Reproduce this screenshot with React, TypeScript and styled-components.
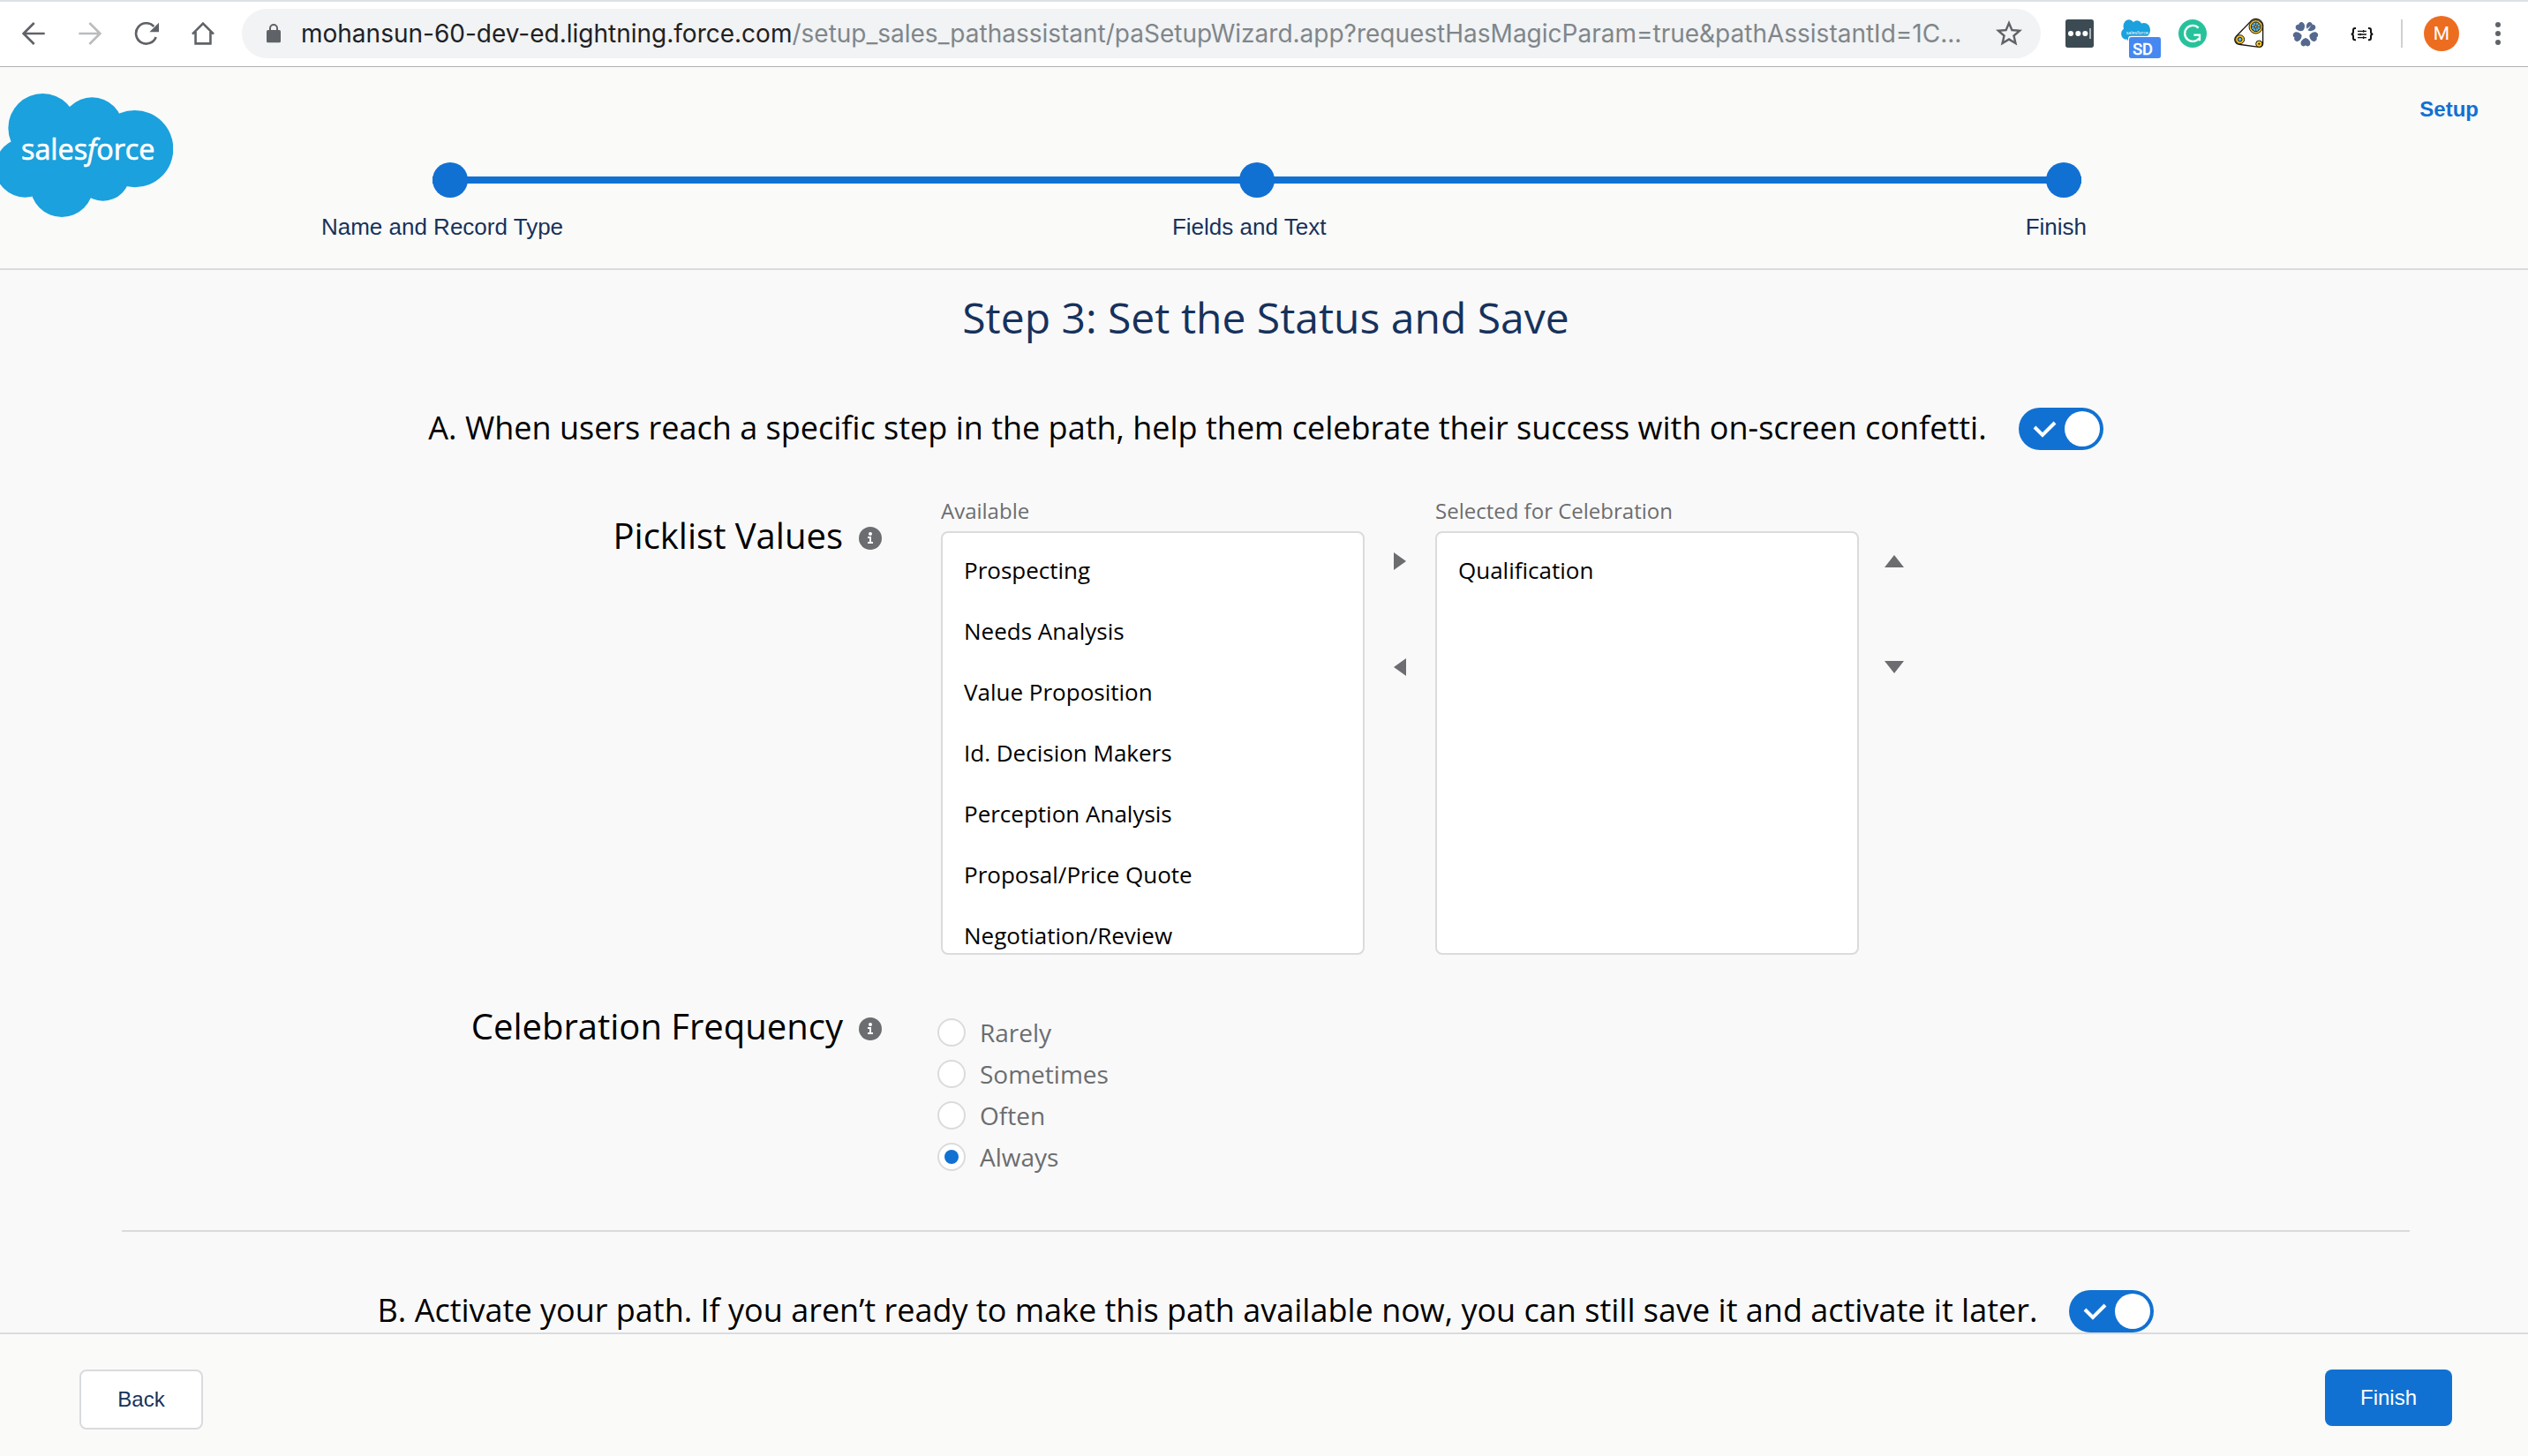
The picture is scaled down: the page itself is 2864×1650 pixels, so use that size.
import React, { useState } from 'react';
import styled, { createGlobalStyle } from 'styled-components';

const color = {
  blue: '#1171d2',
  navy: '#16325c',
  grey: '#6b6d70',
  line: '#d9dbdd',
  chrome: '#5f6368',
  bar: '#fafaf9',
  page: '#f9f9f9',
};

const salesforceSans = '"Open Sans", "Noto Sans", sans-serif';
const arial = '"Liberation Sans", Arial, sans-serif';

const GlobalStyle = createGlobalStyle`
  * { box-sizing: border-box; }
  body { margin: 0; background: ${color.page}; font-family: ${salesforceSans}; }
  button { font: inherit; padding: 0; border: 0; background: none; cursor: pointer; }
  ul, ol { margin: 0; padding: 0; list-style: none; }
`;

const Page = styled.div`
  display: flex;
  flex-direction: column;
  height: 100vh;
`;

/* ---------- browser bar ---------- */

const BrowserBar = styled.div`
  display: flex;
  align-items: center;
  flex: none;
  height: 76px;
  padding: 0 31px 1px 6px;
  background: #fff;
  border-top: 2px solid #dee1e6;
  border-bottom: 1px solid #b3b1b2;
`;

const NavButton = styled.button`
  display: grid;
  place-items: center;
  width: 64px;
  height: 56px;
`;

const AddressBar = styled.div`
  display: flex;
  align-items: center;
  flex: 1;
  min-width: 0;
  height: 56px;
  margin: 0 28px 0 12px;
  padding: 0 18px 0 28px;
  border-radius: 28px;
  background: #f1f3f4;
`;

const Address = styled.div`
  flex: 1;
  min-width: 0;
  margin-left: 23px;
  overflow: hidden;
  white-space: nowrap;
  font: 28px/40px Inter, sans-serif;
  color: #80868b;
`;

const Host = styled.span`
  color: #202124;
`;

const IconButton = styled.button`
  display: grid;
  place-items: center;
`;

const Extensions = styled.div`
  display: flex;
  gap: 32px;
  svg { display: block; overflow: visible; }
`;

const BarDivider = styled.span`
  width: 2px;
  height: 32px;
  margin: 0 24px 0 28px;
  background: #d0d0d0;
`;

const Avatar = styled.button`
  && {
    width: 40px;
    height: 40px;
    margin-right: 41px;
    border-radius: 50%;
    background: #ed6d20;
    color: #fff;
    font: 21px/40px Roboto, sans-serif;
  }
`;

/* ---------- wizard header ---------- */

const Header = styled.header`
  display: grid;
  grid-template-columns: 196px minmax(0, 1fr) auto;
  align-items: start;
  flex: none;
  height: 230px;
  padding-right: 56px;
  background: ${color.bar};
  border-bottom: 2px solid ${color.line};
`;

const LogoLink = styled.a`
  display: block;
  padding-top: 30px;
  svg { display: block; }
`;

const Steps = styled.ol`
  display: flex;
  justify-content: space-between;
  margin: 108px 383px 0 294px;
  background: linear-gradient(${color.blue}, ${color.blue}) 0 16px / 100% 8px no-repeat;
`;

const Step = styled.li`
  display: flex;
  flex-direction: column;
  align-items: center;
  width: 40px;
`;

const StepDot = styled.span`
  width: 40px;
  height: 40px;
  border-radius: 50%;
  background: ${color.blue};
`;

const StepLabel = styled.span`
  margin-top: 18px;
  padding-right: 18px;
  white-space: nowrap;
  font: 26px/30px ${arial};
  color: ${color.navy};
`;

const SetupLink = styled.a`
  padding-top: 34px;
  font: bold 24px/28px ${arial};
  color: ${color.blue};
  text-decoration: none;
`;

/* ---------- wizard body ---------- */

const Main = styled.main`
  flex: 1;
  min-height: 0;
  padding: 22px 134px 0 138px;
  overflow: hidden;
`;

const Title = styled.h1`
  margin: 0 0 70px;
  font-size: 48px;
  font-weight: 400;
  line-height: 64px;
  text-align: center;
  color: ${color.navy};
`;

const Prompt = styled.label`
  display: flex;
  justify-content: center;
  align-items: flex-start;
  gap: 36px;
  height: 48px;
  font-size: 36px;
  line-height: 46px;
  white-space: nowrap;
  color: #000;
`;

const Track = styled.span`
  display: grid;
  flex: none;
  width: 96px;
  height: 48px;
  > * { grid-area: 1 / 1; }
  svg { pointer-events: none; }
`;

const ToggleInput = styled.input`
  appearance: none;
  width: 96px;
  height: 48px;
  margin: 0;
  border-radius: 24px;
  background: #b0adab;
  &::before {
    content: '';
    display: block;
    width: 40px;
    height: 40px;
    margin: 4px;
    border-radius: 50%;
    background: #fff;
  }
  &:checked { background: ${color.blue}; }
  &:checked::before { margin-left: 52px; }
`;

const Field = styled.section<{ $gap: number }>`
  display: grid;
  grid-template-columns: minmax(0, 77fr) minmax(0, 139fr);
  margin-top: ${(p) => p.$gap}px;
`;

const FieldName = styled.div`
  display: flex;
  justify-content: flex-end;
  align-items: center;
  gap: 18px;
  height: 56px;
  margin-top: 15px;
  padding-right: 63px;
`;

const FieldTitle = styled.h2`
  margin: 0;
  font-size: 40px;
  font-weight: 400;
  line-height: 56px;
  color: #000;
`;

const InfoButton = styled.button`
  width: 26px;
  height: 26px;
  margin-top: 6px;
  svg { display: block; }
`;

const Dueling = styled.div`
  display: flex;
  padding-left: 4px;
`;

const PickColumn = styled.div`
  width: 480px;
`;

const PickLabel = styled.div`
  margin-bottom: 8px;
  font-size: 24px;
  line-height: 30px;
  color: ${color.grey};
`;

const PickBox = styled.ul`
  height: 480px;
  padding: 8px 24px 0;
  overflow: hidden;
  border: 2px solid ${color.line};
  border-radius: 8px;
  background: #fff;
`;

const PickItem = styled.li`
  font-size: 26px;
  line-height: 69px;
  color: #000;
`;

const MoveColumn = styled.div`
  display: flex;
  flex-direction: column;
  align-items: center;
  gap: 80px;
  width: 80px;
  padding-top: 52px;
`;

const MoveButton = styled.button`
  display: grid;
  place-items: center;
  width: 40px;
  height: 40px;
`;

const Choices = styled.fieldset`
  margin: 0;
  padding: 26px 0 0;
  border: 0;
`;

const Choice = styled.label`
  display: flex;
  align-items: center;
  gap: 16px;
  height: 47px;
  font-size: 28px;
  color: ${color.grey};
`;

const Radio = styled.input`
  appearance: none;
  display: grid;
  place-items: center;
  width: 32px;
  height: 32px;
  margin: 0;
  border: 2px solid ${color.line};
  border-radius: 50%;
  background: #fff;
  &:checked::before {
    content: '';
    width: 16px;
    height: 16px;
    border-radius: 50%;
    background: ${color.blue};
  }
`;

const Rule = styled.hr`
  height: 2px;
  margin: 60px 0 66px;
  border: 0;
  background: ${color.line};
`;

/* ---------- footer ---------- */

const Footer = styled.footer`
  display: flex;
  justify-content: space-between;
  align-items: flex-start;
  flex: none;
  height: 140px;
  padding: 40px 86px 0 90px;
  border-top: 2px solid ${color.line};
  background: ${color.bar};
`;

const ActionButton = styled.button<{ $primary?: boolean }>`
  && {
    width: ${(p) => (p.$primary ? 144 : 140)}px;
    height: ${(p) => (p.$primary ? 64 : 68)}px;
    border: ${(p) => (p.$primary ? '0' : `2px solid ${color.line}`)};
    border-radius: 8px;
    background: ${(p) => (p.$primary ? color.blue : '#fff')};
    color: ${(p) => (p.$primary ? '#fff' : color.navy)};
    font: 24px/28px ${arial};
  }
`;

/* ---------- drawings ---------- */

const Cloud = () => (
  <g fill="#1ba1dd">
    <circle cx="145" cy="164" r="117" />
    <circle cx="313" cy="165" r="105" />
    <circle cx="458" cy="235" r="131" />
    <circle cx="350" cy="320" r="92" />
    <circle cx="210" cy="360" r="107" />
    <circle cx="85" cy="299" r="101" />
    <path d="M60 200 L240 110 L400 130 L440 350 L300 390 L110 380Z" />
  </g>
);

const Logo = () => (
  <svg width="196" height="140" viewBox="0 47 588 420" role="img" aria-label="salesforce">
    <Cloud />
    <text x="72" y="271" fill="#fff" stroke="#fff" strokeWidth="2" fontSize="97" fontFamily="Open Sans, sans-serif">
      sales<tspan fontStyle="italic">f</tspan>orce
    </text>
  </svg>
);

const BackIcon = () => (
  <svg width="26" height="26" viewBox="76 74 78 78" fill="none" stroke={color.chrome} strokeWidth="8">
    <path d="M153 113H82M117 77L81 113L117 149" />
  </svg>
);

const ForwardIcon = () => (
  <svg width="26" height="26" viewBox="267 74 78 78" fill="none" stroke="#babcbe" strokeWidth="8">
    <path d="M268 113H339M304 77L340 113L304 149" />
  </svg>
);

const ReloadIcon = () => (
  <svg width="28" height="26" viewBox="456 74 84 78" fill="none" stroke={color.chrome} strokeWidth="8">
    <path d="M530 125A35 35 0 1 1 523 89" />
    <path d="M541 75V108H508Z" fill={color.chrome} stroke="none" />
  </svg>
);

const HomeIcon = () => (
  <svg width="26" height="26" viewBox="651 74 78 80" fill="none" stroke={color.chrome} strokeWidth="8">
    <path d="M653 116L690 79L727 116M664 108V149H716V108" />
  </svg>
);

const LockIcon = () => (
  <svg width="16" height="22" viewBox="906 83 48 66" fill="none" aria-label="Secure">
    <path d="M918 106V98A12 12 0 0 1 942 98V106" stroke={color.chrome} strokeWidth="6" />
    <rect x="906" y="104" width="48" height="43" rx="5" fill={color.chrome} />
  </svg>
);

const StarIcon = () => (
  <svg width="36" height="36" viewBox="0 0 24 24" fill={color.chrome}>
    <path d="M22 9.24l-7.19-.62L12 2 9.19 8.63 2 9.24l5.46 4.73L5.82 21 12 17.27 18.18 21l-1.63-7.03L22 9.24zM12 15.4l-3.76 2.27 1-4.28-3.32-2.88 4.38-.38L12 6.1l1.71 4.04 4.38.38-3.32 2.88 1 4.28L12 15.4z" />
  </svg>
);

const PasswordIcon = () => (
  <svg width="32" height="32" viewBox="30 66 96 96">
    <rect x="30" y="66" width="96" height="96" rx="8" fill="#3c4a53" />
    <g fill="#fff">
      <circle cx="48" cy="114" r="9" />
      <circle cx="73" cy="114" r="9" />
      <circle cx="97" cy="114" r="9" />
    </g>
    <rect x="111" y="96" width="6" height="36" fill="#a9b1b5" />
  </svg>
);

const SalesforceBadgeIcon = () => (
  <svg width="32" height="32" viewBox="222 66 96 96">
    <g transform="translate(222 58) scale(.163 .19)">
      <Cloud />
    </g>
    <text x="236" y="116" fill="#fff" fontSize="16" fontFamily="Open Sans, sans-serif">
      salesforce
    </text>
    <rect x="243" y="122" width="114" height="79" rx="10" fill="#fff" />
    <rect x="246" y="126" width="108" height="72" rx="8" fill="#4688f1" />
    <text x="259" y="186" fill="#fff" stroke="#fff" strokeWidth="2" fontSize="54" fontFamily="Roboto, sans-serif">
      SD
    </text>
  </svg>
);

const GrammarIcon = () => (
  <svg width="32" height="32" viewBox="414 66 96 96" fill="none" stroke="#fff" strokeWidth="7">
    <circle cx="462" cy="114" r="48" fill="#27c29b" stroke="none" />
    <path d="M482 95A27 27 0 1 0 484 130M466 119H486V139" />
  </svg>
);

const BeltIcon = () => (
  <svg width="32" height="32" viewBox="606 66 96 96" fill="none" stroke="#1c1810" strokeWidth="3">
    <path d="M658 74L610 124A16 16 0 0 0 620 151L688 160A12 12 0 0 0 701 149V92A24 24 0 0 0 658 74Z" fill="#fff" strokeWidth="4" />
    <circle cx="677" cy="91" r="23" fill="#f6c32d" />
    <circle cx="677" cy="91" r="16" fill="#5fb9e6" />
    <path d="M677 77V105M663 91H691M667 81L687 101M687 81L667 101" strokeWidth="2" />
    <circle cx="677" cy="91" r="4" fill="#f6c32d" strokeWidth="2" />
    <circle cx="623" cy="134" r="15" fill="#f6c32d" />
    <circle cx="623" cy="134" r="7" fill="#5fb9e6" />
    <circle cx="688" cy="149" r="11" fill="#f6c32d" />
    <circle cx="688" cy="149" r="2" fill="#1c1810" />
  </svg>
);

const FlowerIcon = () => (
  <svg width="32" height="32" viewBox="799 66 96 96">
    {[0, 72, 144, 216, 288].map((turn) => (
      <path
        key={turn}
        transform={`rotate(${turn} 847 115)`}
        fill="#55698f"
        d="M847 129C857 131 867 143 862 152C858 159 850 158 847 154C844 158 836 159 832 152C827 143 837 131 847 129Z"
      />
    ))}
    <path d="M866 86L851 108L862 113L828 142L840 118L832 114Z" fill="#fff" />
  </svg>
);

const BracesIcon = () => (
  <svg width="32" height="32" viewBox="989 66 96 96" fill="none" stroke="#111" strokeWidth="6">
    <path d="M1016 96H1013Q1007 96 1007 103V109Q1007 116 1000 116Q1007 116 1007 123V129Q1007 136 1013 136H1016" />
    <path d="M1058 96H1061Q1067 96 1067 103V109Q1067 116 1074 116Q1067 116 1067 123V129Q1067 136 1061 136H1058" />
    <path d="M1022 106H1052M1022 117H1052M1022 128H1052" strokeWidth="4" />
    <path d="M1042 102V110M1031 113V121M1042 124V132" strokeWidth="4" />
  </svg>
);

const MenuIcon = () => (
  <svg width="6" height="28" viewBox="0 0 6 28" fill={color.chrome}>
    <circle cx="3" cy="4" r="3" />
    <circle cx="3" cy="14" r="3" />
    <circle cx="3" cy="24" r="3" />
  </svg>
);

const InfoIcon = () => (
  <svg width="26" height="26" viewBox="0 0 26 26">
    <circle cx="13" cy="13" r="13" fill={color.grey} />
    <circle cx="13" cy="8" r="2" fill="#fff" />
    <path d="M10 11H14V17H16V19H10V17H12V13H10Z" fill="#fff" />
  </svg>
);

const CheckIcon = () => (
  <svg width="96" height="48" viewBox="0 0 96 48" fill="none" stroke="#fff" strokeWidth="4">
    <path d="M18 22L27 31L41 17" />
  </svg>
);

const arrows = {
  right: 'M4 1L18 11L4 21Z',
  left: 'M18 1L4 11L18 21Z',
  up: 'M0 18L11 4L22 18Z',
  down: 'M0 4L11 18L22 4Z',
};

const Arrow = ({ to }: { to: keyof typeof arrows }) => (
  <svg width="22" height="22" viewBox="0 0 22 22" fill={color.grey}>
    <path d={arrows[to]} />
  </svg>
);

/* ---------- parts ---------- */

const Toggle = ({ text }: { text: string }) => {
  const [on, setOn] = useState(true);
  return (
    <Prompt>
      <span>{text}</span>
      <Track>
        <ToggleInput type="checkbox" role="switch" checked={on} onChange={() => setOn(!on)} />
        {on && <CheckIcon />}
      </Track>
    </Prompt>
  );
};

const PickList = ({ label, items }: { label: string; items: string[] }) => (
  <PickColumn>
    <PickLabel>{label}</PickLabel>
    <PickBox role="listbox" aria-label={label}>
      {items.map((item) => (
        <PickItem key={item} role="option" aria-selected={false}>
          {item}
        </PickItem>
      ))}
    </PickBox>
  </PickColumn>
);

const FieldHeading = ({ children }: { children: string }) => (
  <FieldName>
    <FieldTitle>{children}</FieldTitle>
    <InfoButton aria-label={`About ${children}`}>
      <InfoIcon />
    </InfoButton>
  </FieldName>
);

const steps = ['Name and Record Type', 'Fields and Text', 'Finish'];
const available = [
  'Prospecting',
  'Needs Analysis',
  'Value Proposition',
  'Id. Decision Makers',
  'Perception Analysis',
  'Proposal/Price Quote',
  'Negotiation/Review',
];
const frequencies = ['Rarely', 'Sometimes', 'Often', 'Always'];

export default function App() {
  const [frequency, setFrequency] = useState('Always');

  return (
    <Page>
      <GlobalStyle />
      <BrowserBar>
        <NavButton aria-label="Back"><BackIcon /></NavButton>
        <NavButton aria-label="Forward"><ForwardIcon /></NavButton>
        <NavButton aria-label="Reload"><ReloadIcon /></NavButton>
        <NavButton aria-label="Home"><HomeIcon /></NavButton>
        <AddressBar>
          <LockIcon />
          <Address role="textbox" aria-label="Address" tabIndex={0}>
            <Host>mohansun-60-dev-ed.lightning.force.com</Host>
            /setup_sales_pathassistant/paSetupWizard.app?requestHasMagicParam=true&amp;pathAssistantId=1C...
          </Address>
          <IconButton aria-label="Bookmark"><StarIcon /></IconButton>
        </AddressBar>
        <Extensions>
          <IconButton aria-label="Passwords"><PasswordIcon /></IconButton>
          <IconButton aria-label="Salesforce"><SalesforceBadgeIcon /></IconButton>
          <IconButton aria-label="Grammar"><GrammarIcon /></IconButton>
          <IconButton aria-label="Pulleys"><BeltIcon /></IconButton>
          <IconButton aria-label="Flower"><FlowerIcon /></IconButton>
          <IconButton aria-label="Formatter"><BracesIcon /></IconButton>
        </Extensions>
        <BarDivider />
        <Avatar aria-label="Profile">M</Avatar>
        <IconButton aria-label="Menu"><MenuIcon /></IconButton>
      </BrowserBar>

      <Header>
        <LogoLink href="#"><Logo /></LogoLink>
        <Steps>
          {steps.map((step) => (
            <Step key={step}>
              <StepDot />
              <StepLabel>{step}</StepLabel>
            </Step>
          ))}
        </Steps>
        <SetupLink href="#">Setup</SetupLink>
      </Header>

      <Main>
        <Title>Step 3: Set the Status and Save</Title>
        <Toggle text="A. When users reach a specific step in the path, help them celebrate their success with on-screen confetti." />

        <Field $gap={54}>
          <FieldHeading>Picklist Values</FieldHeading>
          <Dueling>
            <PickList label="Available" items={available} />
            <MoveColumn>
              <MoveButton aria-label="Add"><Arrow to="right" /></MoveButton>
              <MoveButton aria-label="Remove"><Arrow to="left" /></MoveButton>
            </MoveColumn>
            <PickList label="Selected for Celebration" items={['Qualification']} />
            <MoveColumn>
              <MoveButton aria-label="Move up"><Arrow to="up" /></MoveButton>
              <MoveButton aria-label="Move down"><Arrow to="down" /></MoveButton>
            </MoveColumn>
          </Dueling>
        </Field>

        <Field $gap={38}>
          <FieldHeading>Celebration Frequency</FieldHeading>
          <Choices aria-label="Celebration Frequency">
            {frequencies.map((name) => (
              <Choice key={name}>
                <Radio
                  type="radio"
                  name="frequency"
                  checked={frequency === name}
                  onChange={() => setFrequency(name)}
                />
                {name}
              </Choice>
            ))}
          </Choices>
        </Field>

        <Rule />
        <Toggle text="B. Activate your path. If you aren’t ready to make this path available now, you can still save it and activate it later." />
      </Main>

      <Footer>
        <ActionButton>Back</ActionButton>
        <ActionButton $primary>Finish</ActionButton>
      </Footer>
    </Page>
  );
}
